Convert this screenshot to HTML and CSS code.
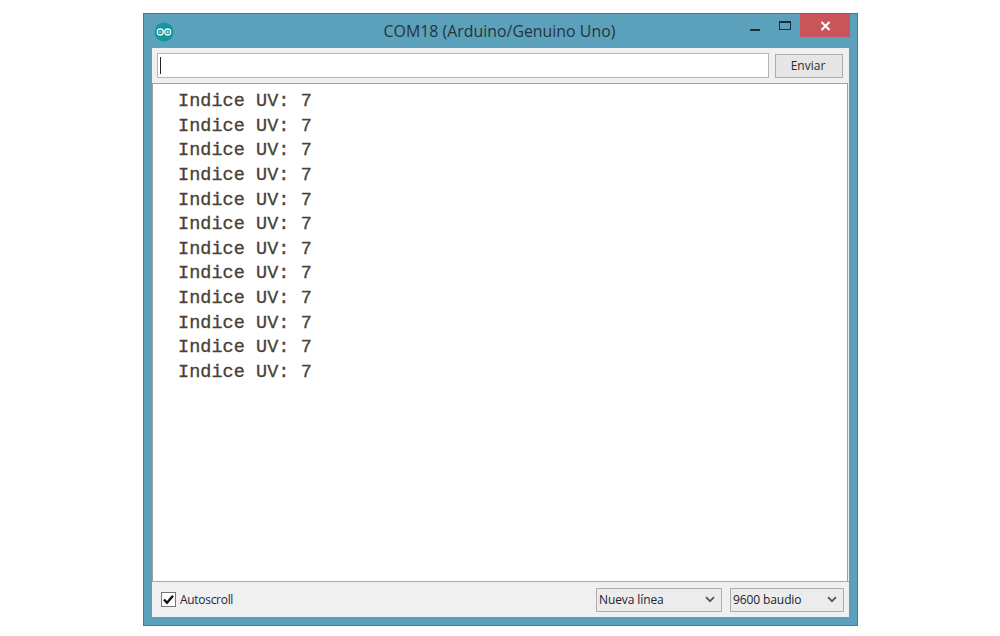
FILE: index.html
```html
<!DOCTYPE html>
<html lang="es">
<head>
<meta charset="utf-8">
<title>COM18 (Arduino/Genuino Uno)</title>
<link rel="stylesheet" href="styles.css">
</head>
<body>
<div class="window">
  <div class="titlebar">
    <svg class="logo" width="20" height="20" viewBox="0 0 20 20">
      <circle cx="10" cy="10" r="9.5" fill="#14979c"/>
      <circle cx="6.3" cy="10" r="3" fill="none" stroke="#e8f4f4" stroke-width="1.3"/>
      <circle cx="13.7" cy="10" r="3" fill="none" stroke="#e8f4f4" stroke-width="1.3"/>
      <path d="M5 10h2.6M12.4 10h2.6M13.7 8.7v2.6" stroke="#e8f4f4" stroke-width="0.9"/>
    </svg>
    <div class="title">COM18 (Arduino/Genuino Uno)</div>
    <div class="controls">
      <span class="minimize"></span>
      <span class="maximize"></span>
      <span class="close">
        <svg width="11" height="10" viewBox="0 0 11 10"><path d="M1.5 1l8 8M9.5 1l-8 8" stroke="#fff" stroke-width="2"/></svg>
      </span>
    </div>
  </div>
  <div class="panel">
    <div class="inputrow">
      <div class="input"><span class="caret"></span></div>
      <div class="button">Enviar</div>
    </div>
    <div class="output">
      <div>Indice UV: 7</div>
      <div>Indice UV: 7</div>
      <div>Indice UV: 7</div>
      <div>Indice UV: 7</div>
      <div>Indice UV: 7</div>
      <div>Indice UV: 7</div>
      <div>Indice UV: 7</div>
      <div>Indice UV: 7</div>
      <div>Indice UV: 7</div>
      <div>Indice UV: 7</div>
      <div>Indice UV: 7</div>
      <div>Indice UV: 7</div>
    </div>
    <div class="footer">
      <div class="check">
        <svg width="15" height="15" viewBox="0 0 15 15"><path d="M3 7.5l3 3.2 6-7" fill="none" stroke="#111" stroke-width="2.4"/></svg>
      </div>
      <div class="checklabel">Autoscroll</div>
      <div class="select line"><span>Nueva línea</span><svg width="10" height="7" viewBox="0 0 10 7"><path d="M1 1.2l4 4 4-4" fill="none" stroke="#555" stroke-width="1.8"/></svg></div>
      <div class="select baud"><span>9600 baudio</span><svg width="10" height="7" viewBox="0 0 10 7"><path d="M1 1.2l4 4 4-4" fill="none" stroke="#555" stroke-width="1.8"/></svg></div>
    </div>
  </div>
</div>
</body>
</html>
```
FILE: styles.css
```css
html, body {
  margin: 0;
  padding: 0;
  background: #fff;
}
body {
  width: 1000px;
  height: 636px;
  overflow: hidden;
  padding-top: 13px;
  box-sizing: border-box;
  font-family: "Open Sans", "Liberation Sans", sans-serif;
}
.window {
  width: 715px;
  height: 613px;
  margin-left: 143px;
  box-sizing: border-box;
  background: #5ba1bb;
  border: 1px solid #3f7e96;
  padding: 0 8px 8px;
  display: flex;
  flex-direction: column;
}
.titlebar {
  height: 34px;
  display: flex;
  align-items: center;
  position: relative;
  flex: none;
}
.logo {
  margin-left: 2px;
  margin-top: 1px;
}
.title {
  position: absolute;
  left: 0;
  right: 2px;
  top: 6px;
  text-align: center;
  font-size: 15.9px;
  line-height: 22px;
  color: #26343c;
}
.controls {
  position: absolute;
  right: -1px;
  top: 0;
  display: flex;
  align-items: flex-start;
}
.minimize {
  width: 10px;
  height: 2px;
  background: #1f2f38;
  margin-top: 15px;
  margin-right: 19px;
}
.maximize {
  width: 12px;
  height: 9px;
  box-sizing: border-box;
  border: 1px solid #1f2f38;
  border-top-width: 2px;
  margin-top: 7px;
  margin-right: 9px;
}
.close {
  width: 50px;
  height: 23px;
  background: #c9555b;
  display: flex;
  align-items: center;
  justify-content: center;
}
.panel {
  flex: 1;
  display: flex;
  flex-direction: column;
  background: #f0f0f0;
  min-height: 0;
}
.inputrow {
  height: 35px;
  flex: none;
  display: flex;
  align-items: center;
  padding: 0 5px;
  gap: 6px;
  box-sizing: border-box;
}
.input {
  width: 612px;
  height: 25px;
  box-sizing: border-box;
  background: #fff;
  border: 1px solid #b5b5b5;
  display: flex;
  align-items: center;
  padding-left: 2px;
}
.caret {
  width: 1px;
  height: 17px;
  background: #222;
}
.button {
  width: 68px;
  height: 24px;
  box-sizing: border-box;
  border: 1px solid #adadad;
  background: #e6e6e6;
  font-size: 12px;
  line-height: 22px;
  text-align: center;
  padding-right: 2px;
  color: #2b2b2b;
}
.output {
  flex: 1;
  background: #fff;
  border: 1px solid #a0a0a0;
  border-bottom: 0;
  margin: 0 1px 0 0;
  padding: 6px 0 0 25px;
  font-family: "Liberation Mono", monospace;
  font-size: 18.5px;
  letter-spacing: 0.05px;
  line-height: 24.64px;
  color: #4a4036;
  -webkit-text-stroke: 0.3px #4a4036;
  min-height: 0;
}
.footer {
  height: 36px;
  flex: none;
  box-sizing: border-box;
  border-top: 1px solid #a8a8a8;
  display: flex;
  align-items: center;
  padding: 0 5px 0 9px;
  font-size: 12px;
  color: #26263a;
}
.check {
  width: 15px;
  height: 15px;
  box-sizing: border-box;
  border: 1px solid #777;
  background: #fff;
  display: flex;
  align-items: center;
  justify-content: center;
  overflow: hidden;
  flex: none;
}
.check svg {
  flex: none;
}
.checklabel {
  margin-left: 4px;
  flex: 1;
  letter-spacing: -0.3px;
}
.select {
  height: 24px;
  box-sizing: border-box;
  border: 1px solid #adadad;
  background: #ececec;
  display: flex;
  align-items: center;
  justify-content: space-between;
  padding: 0 6px 0 2px;
  color: #22222e;
  letter-spacing: -0.1px;
}
.line {
  width: 126px;
  margin-right: 8px;
}
.baud {
  width: 114px;
}
```
